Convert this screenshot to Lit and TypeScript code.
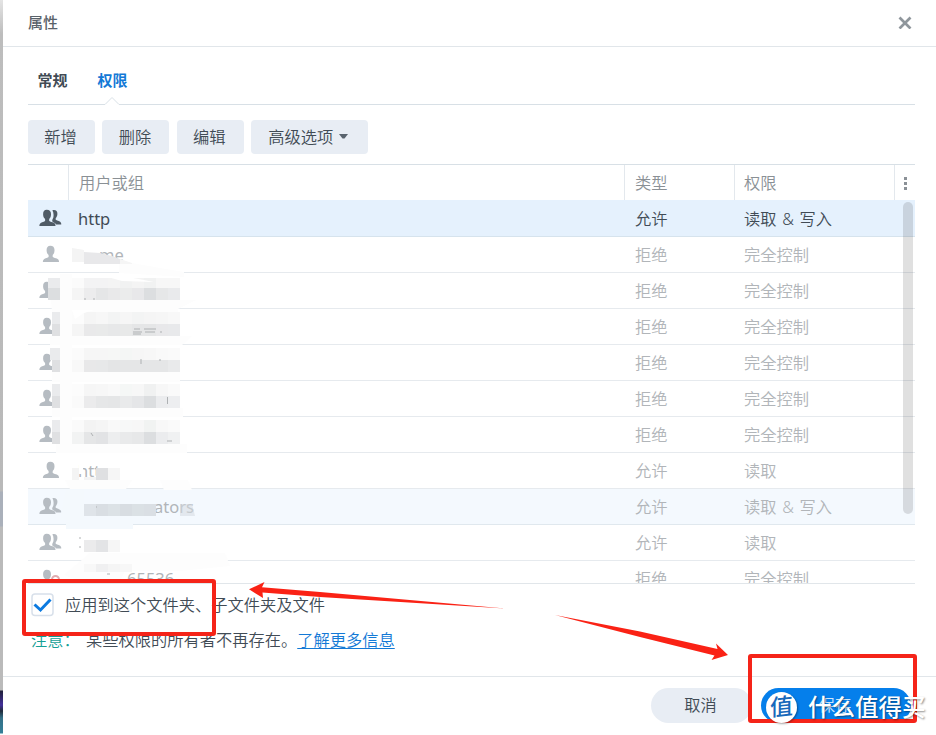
import { LitElement, html, css, svg, nothing } from "lit";
import { customElement, property } from "lit/decorators.js";

type Row = { icon: "group" | "user" | "badge"; name?: string; indent?: number; type: string; perm: string; state?: string };

const ROWS: Row[] = [
  { icon: "group", name: "http", type: "允许", perm: "读取 & 写入", state: "selected" },
  { icon: "user", name: "me", indent: 21, type: "拒绝", perm: "完全控制" },
  { icon: "group", type: "拒绝", perm: "完全控制" },
  { icon: "group", type: "拒绝", perm: "完全控制" },
  { icon: "group", type: "拒绝", perm: "完全控制" },
  { icon: "group", type: "拒绝", perm: "完全控制" },
  { icon: "group", type: "拒绝", perm: "完全控制" },
  { icon: "user", name: "htt", type: "允许", perm: "读取" },
  { icon: "group", name: "ators", indent: 76, type: "允许", perm: "读取 & 写入", state: "hover" },
  { icon: "group", type: "允许", perm: "读取" },
  { icon: "badge", name: "65536", indent: 49, type: "拒绝", perm: "完全控制" },
];

/* Each strip: x, y, cell height, then one grey level per 12px cell. */
const STRIPS: [number, number, number, string[]][] = [
  [48, 278, 10, ["eaebed"]],
  [48, 288, 12, ["dcdee0"]],
  [72, 278, 10, ["fbfbfb", "f3f3f4", "f3f3f4", "f4f4f4", "f1f2f2", "f4f4f4", "f1f2f2", "f7f7f7", "f7f7f7"]],
  [72, 288, 12, ["f5f5f5", "ececed", "e5e6e7", "e9e9ea", "ebecec", "e8e8ea", "dcdee0", "e6e7e8", "e9eaec"]],
  [52, 312, 12, ["eaebed"]],
  [52, 324, 12, ["dfe0e2"]],
  [72, 312, 12, ["fcfcfc", "f5f5f5", "f7f7f7", "f3f4f4", "f6f6f6", "f3f4f4", "f5f5f5", "f6f6f6", "f8f8f8"]],
  [72, 324, 12, ["f5f5f5", "e9e9ea", "e9eaea", "e7e8e9", "e8e9e9", "e5e6e7", "e5e6e7", "e8e8ea", "e8e9eb"]],
  [50, 348, 12, ["eaebed"]],
  [52, 360, 12, ["dfe0e2"]],
  [72, 348, 12, ["fbfbfb", "f6f6f6", "f6f6f6", "f6f7f6", "f4f6f5", "f6f6f6", "f7f7f7", "f9f9f9", "fafafa"]],
  [72, 360, 12, ["f8f8f8", "e8e8e9", "e7e8e9", "e4e5e6", "e5e6e7", "e5e6e7", "e5e6e7", "e5e6e7", "e9eaeb"]],
  [52, 384, 12, ["eaebed"]],
  [52, 396, 12, ["dfe0e2"]],
  [72, 384, 12, ["fcfcfc", "f6f6f6", "f7f7f7", "f9f9f9", "f5f7f6", "f7f7f7", "f0f1f1", "f7f7f7", "fafafa"]],
  [72, 396, 12, ["fafafa", "ebebec", "e6e7e8", "e5e6e7", "e9eaeb", "e5e6e8", "dcdee0", "ebecee", "edeef0"]],
  [52, 420, 12, ["eaebed"]],
  [52, 432, 12, ["dfe0e2"]],
  [72, 420, 12, ["fafafa", "f3f3f3", "f5f5f5", "f9f9f9", "f7f8f8", "f7f7f7", "f1f3f2", "f8f8f8", "fafafa"]],
  [72, 432, 12, ["f2f3f3", "e5e6e7", "e2e3e5", "edeeef", "e9eaeb", "e7e8e9", "dcdee0", "ebecee", "f0f1f2"]],
  [96, 468, 12, ["dfe0e2", "f6f6f6"]],
  [84, 504, 12, ["dfe4e9", "d9dee3", "dce2e6", "d8dde2", "dbe1e5", "dadfe4"]],
  [84, 540, 12, ["ebebec", "e3e4e6", "f6f6f6"]],
  [84, 564, 8, ["f8f8f8", "f0f0f1", "f5f5f5", "f7f7f7"]],
];

@customElement("person-icon")
class PersonIcon extends LitElement {
  @property() kind = "group";
  static styles = css`
    :host { display: block; width: 24px; height: 18px; }
    svg { display: block; }
  `;
  render() {
    const body = "M7.8.8C10.6.8 12.2 2.6 12 5.4 11.9 8 11 9 10.2 10v2.1c1.3.9 5.3 1.4 6 3.1.2.6.3 1.1.3 1.8H.4c0-.7 0-1.2.3-1.8.7-1.7 4.1-2.2 5.4-3.1V10C5.200 9 4.200 8 4.100 5.400 4 2.600 5.200.800 7.800.800z";
    return svg`<svg width="24" height="18" viewBox="0 0 24 18" fill="currentColor">
      ${this.kind === "user" ? svg`<path transform="translate(3.500 0)" d=${body}/>` : svg`<path d=${body}/>`}
      ${this.kind === "group"
        ? svg`<path d="M13.400 1.200C16.500.400 18.600 2 18.400 5c-.1 2.300-.9 3.200-1.700 4.300v1.500c1.700 1 4.700 1.500 5.400 3.200l.2 1.500h-5.100c-.7-1.500-3.300-2.300-3.900-3.100-.2-.9-.1-1.600.4-2.300C15 8 14.900 3.800 13.400 1.200z"/>`
        : nothing}
      ${this.kind === "badge" ? svg`<circle cx="16.500" cy="10.500" r="3.500" fill="#fff" stroke="#dfadb0" stroke-width="2"/>` : nothing}
    </svg>`;
  }
}

@customElement("permission-table")
class PermissionTable extends LitElement {
  static styles = css`
    :host { display: block; height: 420px; box-sizing: border-box; border-top: 1px solid #d8e0e6; border-bottom: 1px solid #e1e6ea; position: relative; overflow: hidden; word-spacing: 1.500px; }
    .row { display: grid; grid-template-columns: 40px 556px 110px 160px 21px; height: 36px; box-sizing: border-box; border-bottom: 1px solid #e6eaee; color: #b1b5b9; align-items: center; }
    .row > * { padding-left: 10px; white-space: pre; line-height: 24px; }
    .row > .name { font-weight: 400; font-size: 16.500px; }
    .row > :nth-child(3) { padding-left: 11px; }
    .head { height: 35px; border: 0; color: #8a9095; }
    .head > * { border-left: 1px solid #e3e8ed; line-height: 37px; height: 35px; box-sizing: border-box; }
    .head > :nth-child(3) { padding-left: 10px; }
    .head > :nth-child(4) { padding-left: 9px; }
    .head > :first-child { border: 0; }
    .head .dots { display: flex; flex-direction: column; gap: 2px; padding: 12px 0 0 9px; }
    .dots i { width: 3px; height: 3px; background: #8b9197; }
    .selected { background: #e5f1fd; color: #414b55; border-color: #d6e3ed; height: 37px; padding-top: 1px; }
    .hover { background: #f4f9fe; border-color: #e0e8ee; }
    person-icon { color: #b6bcc2; margin-top: -1px; line-height: 0; }
    .selected person-icon { color: #505b65; margin-top: -2px; }
    .row > person-icon { padding-left: 11px; }
    .bar { position: absolute; right: 2px; top: 37px; width: 10px; height: 312px; border-radius: 5px; background: rgba(0, 0, 0, 0.12); }
  `;
  render() {
    return html`
      <div class="row head"><span></span><span>用户或组</span><span>类型</span><span>权限</span><span class="dots"><i></i><i></i><i></i></span></div>
      ${ROWS.map(r => html`<div class="row ${r.state ?? ""}">
        <person-icon .kind=${r.icon}></person-icon>
        <span class="name" style="text-indent:${r.indent ?? 0}px">${r.name ?? ""}</span><span>${r.type}</span><span>${r.perm}</span>
      </div>`)}
      <div class="bar"></div>`;
  }
}

@customElement("app-root")
class AppRoot extends LitElement {
  static styles = css`
    :host { display: flex; position: relative; width: 936px; height: 735px; overflow: hidden; background: #fff; color: #414b55; font: 350 16.250px "Noto Sans", "Noto Sans CJK SC", sans-serif; }
    .backdrop { width: 3px; flex: none; background: linear-gradient(#e4e4e4, #bdbdbd 34px, #b9b9b9 491px, #aab0ba 492px, #aab0ba 526px, #bababa 527px, #bababa 690px, #20203a 691px, #43309b 705px, #202b3b 711px, #347087 718px, #347f98 733px, #fff 734px); }
    .dialog { flex: 1; display: flex; flex-direction: column; min-width: 0; }
    header { height: 47px; box-sizing: border-box; border-bottom: 1px solid #e1e6ea; display: flex; align-items: center; justify-content: space-between; padding: 0 24px 2px 25px; font-size: 15px; font-weight: 500; color: #59626a; }
    header span { margin-top: -2px; }
    header svg { display: block; }
    main { display: flex; flex-direction: column; margin: 0 21px 0 25px; height: 629px; }
    .tabs { display: flex; gap: 30px; height: 57px; box-sizing: border-box; padding: 21px 0 0 9.500px; font-size: 15px; line-height: 24px; font-weight: 700; }
    .tabs .on { color: #1379d6; }
    .notch { display: block; height: 8px; margin-top: -7px; }
    .tools { display: flex; gap: 7.400px; margin-top: 15px; height: 34px; }
    .btn { width: 67px; box-sizing: border-box; padding: 0 2px 2px 0; border-radius: 4px; background: #e8edf4; display: flex; align-items: center; justify-content: center; gap: 6px; }
    .wide { width: 117px; padding-right: 3px; }
    permission-table { margin-top: 10px; flex: none; }
    .check { display: flex; align-items: center; gap: 11px; margin: 9px 0 0 3px; height: 24px; }
    .check svg { display: block; }
    .check span { margin-top: -2px; }
    .note { display: flex; margin: 11px 0 0 3px; line-height: 24px; }
    .note b { font-weight: inherit; color: #16a096; width: 55px; }
    .note a { color: #1379d6; text-decoration: underline; text-underline-offset: 2px; }
    footer { border-top: 1px solid #e1e6ea; display: flex; padding: 11px 25px 0 0; justify-content: flex-end; gap: 9px; }
    .pill { height: 35px; width: 101px; box-sizing: border-box; padding: 0 2px 3px 0; border-radius: 18px; background: #e8edf4; display: flex; align-items: center; justify-content: center; }
    .save { width: 150px; background: #057feb; color: #cfe6fb; }
    .over { position: absolute; left: 0; top: 0; }
    .mark { position: absolute; left: 766px; top: 692px; display: flex; align-items: center; gap: 11px; color: #fff; font-size: 23.500px; font-weight: 500; line-height: 31px; white-space: nowrap; text-shadow: 1px 1px 2px rgba(0, 0, 0, 0.45); }
    .mark i { width: 31px; height: 31px; border-radius: 50%; background: #fff; color: #1769bb; font-style: normal; font-weight: 500; font-size: 23px; text-align: center; text-shadow: none; box-shadow: 1px 1px 2px rgba(0, 0, 0, 0.35); line-height: 29px; }
    .mark i b { display: block; font-weight: inherit; transform: skewY(-6deg); }
  `;
  render() {
    return html`
      <div class="backdrop"></div>
      <div class="dialog">
        <header><span>属性</span>
          <svg width="14" height="14" viewBox="0 0 14 14"><path d="M1.500 2.500l11 11M12.500 2.500l-11 11" stroke="#8f969c" stroke-width="2.700"/></svg>
        </header>
        <main>
          <div class="tabs"><span>常规</span><span class="on">权限</span></div>
          <svg class="notch" width="887" height="8"><path d="M0 7.500H77L84 .5L91 7.500H887" fill="none" stroke="#d8e0e6"/></svg>
          <div class="tools">
            <div class="btn">新增</div><div class="btn">删除</div><div class="btn">编辑</div>
            <div class="btn wide">高级选项<svg width="9" height="5"><path d="M0 0h9L5.500 4.500h-2z" fill="#59636d"/></svg></div>
          </div>
          <permission-table></permission-table>
          <div class="check">
            <svg width="23" height="24" viewBox="0 0 23 24"><rect x="1" y="1" width="21" height="21.500" rx="3" fill="#fff" stroke="#d8e0ea" stroke-width="1.500"/><path d="M3.500 11.500l6 5.500L19.500 6.500" fill="none" stroke="#0c7ae0" stroke-width="3"/></svg>
            <span>应用到这个文件夹、子文件夹及文件</span>
          </div>
          <div class="note"><b>注意：</b><span>某些权限的所有者不再存在。</span><a>了解更多信息</a></div>
        </main>
        <footer><div class="pill">取消</div><div class="pill save">保存</div></footer>
      </div>
      <svg class="over" width="936" height="735">
        <g fill="#fdfdfd">
          <path d="M119 264L132 263L160 268L184 272V277L119 273z"/>
          <path d="M51 300H170L196 300L178 309V313H52zM50 336H192L182 345H50zM52 372H180V382H52zM52 408H183V417H52zM56 444H187V453H56z"/>
          <path d="M60 274H72V450H60z"/>
          <path d="M65 480H132L126 489H70zM160 480H188L192 490H164z"/>
          <path d="M90 553H225L230 566L180 571H125L120 581H80L64 575z"/>
        </g>
        <path d="M66 490H84V520H60zM66 520H133V529H66z" fill="#f4f9fd"/>
        <path d="M72 248L84 250V262H72z" fill="#f4f4f4"/>
        <path d="M84 252L100 253L112 256L120 259V264H84z" fill="#e8e8ea"/>
        <path d="M120 259L132 263V264H120z" fill="#f5f5f5"/>
        <path d="M72 468H79V480H72zM84 477H96V480H84z" fill="#f4f4f4"/>
        <path d="M180 504H192L195 516H180z" fill="#d5dbe0" fill-opacity=".55"/>
        ${STRIPS.map(([x, y, h, cells]) => cells.map((c, i) => svg`<rect x=${x + i * 12} y=${y} width=${x > 48 && x < 60 ? 60 - x : 12} height=${h} fill=${"#" + c} shape-rendering="crispEdges"/>`))}
        <path d="M104 276L128 277L154 282L122 281z M75 319L84 313L94 310H72z M79 462H83V474H79z" fill="#fff"/>
        <path d="M134 329h6M144 329h12M133 332h9M145 332h10M133 334h8M160 332h2M141 359v5M160 359v2M167.500 397v7M91 433l2 3M167 441h5M85 298v2M94 298v2M80 537v2M79 547h2M96 507h1M107 574h3" fill="none" stroke="#aeb1b3"/>
        <g fill="none" stroke="#f52419" stroke-width="4"><rect x="24" y="581" width="190" height="53" rx="1"/><rect x="750" y="656" width="165" height="65" rx="1"/></g>
        <g fill="#fa2215"><path d="M249 589.300L264.500 582L262 587.300L320 592L505 608.500L320 597L262.500 592.500L263 598z"/><path d="M555 615L640 631.500L717.500 649L716 643.500L728 655L711.500 660L714.500 655.500L640 637z"/></g>
      </svg>
      <div class="mark"><i><b>值</b></i><span>什么值得买</span></div>`;
  }
}
